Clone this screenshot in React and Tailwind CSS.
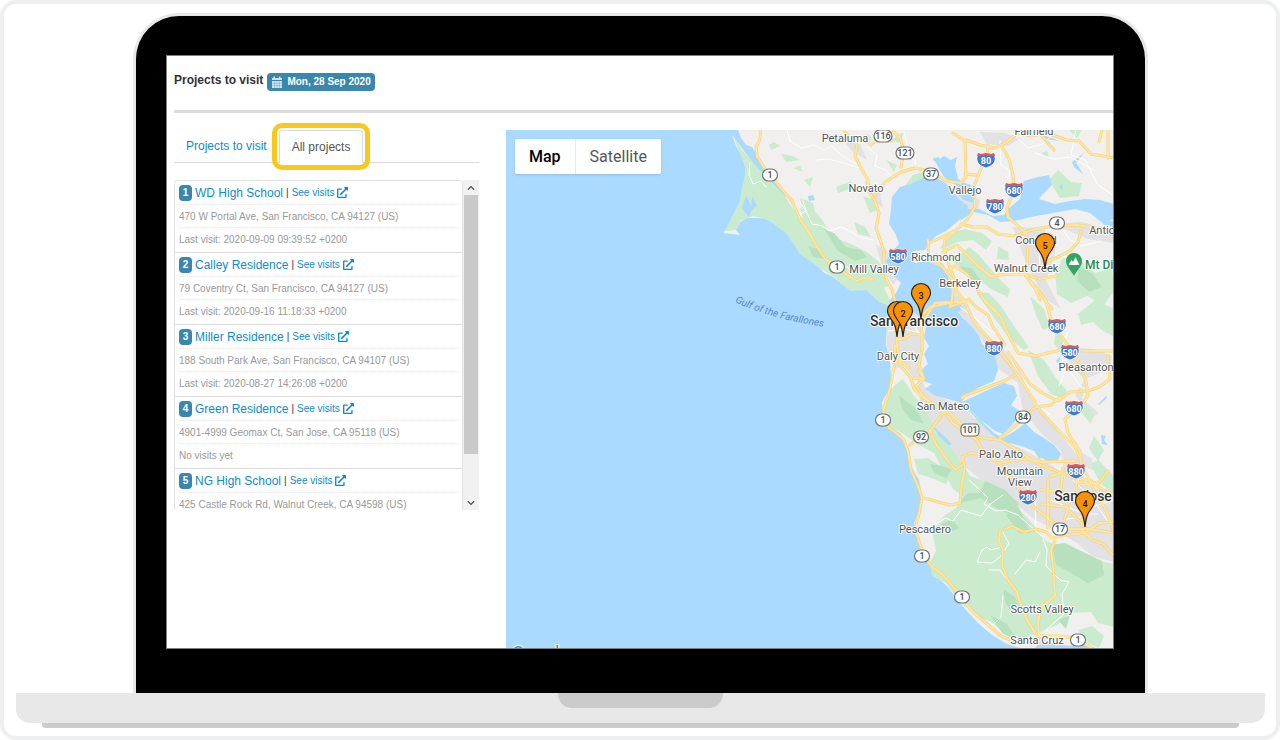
import { useState } from "react";
import { FaExternalLinkAlt, FaChevronUp, FaChevronDown } from "react-icons/fa";

const projects = [
  { id: 1, name: "WD High School", address: "470 W Portal Ave, San Francisco, CA 94127 (US)", visit: "Last visit: 2020-09-09 09:39:52 +0200" },
  { id: 2, name: "Calley Residence", address: "79 Coventry Ct, San Francisco, CA 94127 (US)", visit: "Last visit: 2020-09-16 11:18:33 +0200" },
  { id: 3, name: "Miller Residence", address: "188 South Park Ave, San Francisco, CA 94107 (US)", visit: "Last visit: 2020-08-27 14:26:08 +0200" },
  { id: 4, name: "Green Residence", address: "4901-4999 Geomax Ct, San Jose, CA 95118 (US)", visit: "No visits yet" },
  { id: 5, name: "NG High School", address: "425 Castle Rock Rd, Walnut Creek, CA 94598 (US)", visit: "" },
];

// Map artwork, all in the same coordinate space as the viewBox of <BayAreaMap />
const land =
  "M738 130 L741 138 746 145 752 147 758 156 766 170 774 180 782 190 786 198 778 194 768 183 758 171 750 159 742 148 732 135 736 146 742 156 746 166 745 178 743 190 739 203 734 216 729 226 723 233 740 235 736 230 740 222 747 218 757 218 766 219 776 224 788 234 795 243 799 252 808 258 818 265 823 272 833 277 843 285 855 289 864 287 868 291 876 299 885 304 891 306 887 320 886 345 890 360 891 378 889 390 882 402 883 418 890 427 901 434 905 446 910 460 913 470 919 480 922 497 919 510 914 524 918 542 923 556 929 565 937 577 947 586 956 598 966 610 978 623 992 635 1007 644 1020 648 L1114 648 L1114 130Z";

const water = [
  // san pablo bay and central bay
  "M892 197 L900 187 911 184 923 178 937 178 947 184 952 191 960 200 968 206 966 213 957 222 946 231 936 236 929 243 925 250 913 251 910 256 915 263 926 261 936 265 944 269 948 277 951 290 955 302 963 307 958 312 964 319 972 327 979 336 982 344 993 350 996 360 998 370 994 381 980 387 967 394 962 402 971 411 983 423 994 433 1003 438 1015 431 1025 423 1034 432 1044 438 1054 445 1061 454 1057 462 1046 461 1034 451 1021 446 1009 443 998 440 987 430 974 416 961 403 948 399 936 396 925 389 932 384 920 380 919 372 928 364 924 354 929 346 924 338 926 327 921 318 909 309 896 305 889 301 896 293 901 283 891 273 886 261 892 252 899 244 896 235 889 224 891 210Z",
  "M962 402 L975 396 990 389 1004 383 1014 386 1017 396 1011 405 1021 412 1013 424 1003 434 995 431 981 420Z",
  // carquinez strait and suisun bay
  "M963 209 L979 209 993 216 1004 215 1008 209 1020 199 1024 181 1038 177 1049 175 1052 185 1043 194 1039 199 1055 204 1070 201 1085 199 1100 200 1114 204 1114 219 1101 222 1090 213 1075 209 1053 213 1036 216 1014 221 1000 222 988 215 973 212 960 221Z",
  // lakes, creeks and salt ponds
  "M932 159 L938 160 944 156 951 160 957 157 955 166 958 178 951 176 945 172 940 166Z M933 158 L939 157 943 169 957 180 953 184 944 177Z M952 174 L962 182 971 185 977 193 972 203 962 199 956 190Z",
  "M1040 134 L1060 141 1045 139Z M1072 162 L1084 153 1076 163 1084 175 1074 167Z M1059 187 L1063 183 1062 190Z",
  "M1083 208 L1094 211 1104 225 1114 227 1114 222 1099 216Z",
  "M932 425 L944 436 952 444 948 445 938 435Z",
  "M1098 404 L1107 395 1106 399 1099 405Z M1101 435 L1106 436 1104 440 1108 445 1102 444Z",
  "M746 195 L752 208 749 217 742 208Z M752 196 L757 205 751 211Z",
  "M808 196 L813 195 815 200 809 201Z M1056 361 L1061 355 1059 364Z",
  "M1037 645 L1052 643 1069 646 1080 642 1094 648 1035 649Z",
];

const parks = [
  "M733 135 L742 150 760 170 783 194 792 207 803 219 813 232 824 246 835 262 851 270 866 267 872 278 882 284 887 294 892 305 880 303 866 290 850 291 834 277 818 267 800 254 787 234 768 220 753 216 740 221 736 230 725 231 739 203 746 170Z",
  "M800 208 L817 213 823 221 831 236 851 244 868 253 878 261 885 271 888 286 880 289 866 275 846 266 825 261 808 237Z",
  "M800 198 L813 203 817 219 803 213Z",
  "M891 140 L904 132 899 143Z M836 187 L851 181 850 189 838 193Z M886 160 L897 165 894 172Z",
  "M904 187 L913 175 926 171 934 177 913 184 897 196Z",
  "M939 249 L952 233 964 229 982 233 992 241 986 250 973 240 957 242 948 247Z",
  "M953 262 L969 247 979 255 989 267 999 279 1010 289 1008 297 991 289 977 278Z",
  "M976 292 L989 293 1001 306 1012 323 1021 336 1029 347 1024 350 1009 338 994 318Z",
  "M998 246 L1008 252 1009 260 997 259Z",
  "M1055 273 L1063 258 1082 262 1095 273 1112 268 1114 291 1104 305 1087 296 1071 303 1057 294Z",
  "M1078 314 L1095 300 1114 309 1114 337 1102 330 1093 322 1081 325Z",
  "M1030 296 L1044 309 1050 327 1043 330 1036 315Z M1056 330 L1062 340 1071 356 1064 358 1054 343Z",
  "M1028 350 L1044 360 1056 378 1067 391 1063 399 1051 394 1038 376Z",
  "M1049 180 L1058 170 1071 182 1082 183 1079 196 1060 198Z",
  "M1069 130 L1082 130 1077 138Z M1041 154 L1047 150 1049 158Z",
  "M863 196 L872 199 878 210 870 213Z M854 222 L865 227 871 237 858 234Z M866 133 L872 138 868 146Z",
  "M891 388 L903 379 914 396 923 406 931 421 936 433 949 444 961 462 970 476 982 480 992 491 1003 498 1017 507 1033 524 1046 541 1060 546 1075 552 1094 558 1103 566 1108 588 1114 603 1114 627 1098 623 1091 612 1070 613 1057 625 1045 630 1026 638 1014 639 1002 631 991 622 978 616 961 603 946 583 932 576 930 562 936 551 932 530 945 515 956 508 963 497 953 489 944 472 934 453 917 444 902 433 889 427 884 409Z",
  "M914 459 L928 458 940 466 951 474 946 484 929 477 918 474Z",
  "M1051 545 L1064 543 1081 553 1100 561 1114 564 1114 600 1091 590 1071 577 1055 568Z",
  "M1090 464 L1099 460 1113 476 1114 494 1101 484Z",
  "M1078 630 L1092 626 1104 636 1099 648 1087 643Z",
  "M1085 405 L1094 413 1091 424 1080 411Z M1094 436 L1104 450 1098 461 1089 448Z",
  "M900 280 L908 277 913 285 904 289Z",
  "M975 419 L983 416 984 424 977 425Z",
  "M769 145 L774 142 780 146 771 150Z M781 154 L793 156 800 160 786 162Z M793 168 L800 166 803 172Z M804 180 L813 177 810 187Z",
];

const darkParks = [
  "M824 229 L834 233 846 247 861 250 867 257 855 261 838 251Z",
  "M808 246 L820 250 824 259 813 257Z",
  "M899 395 L907 402 916 409 924 424 911 420 902 408Z",
  "M985 481 L1005 490 1019 504 1012 516 996 508 981 498 956 504 968 493 980 493Z",
  "M930 464 L943 466 952 470 946 478 934 473Z",
  "M1006 515 L1018 506 1025 520 1031 533 1019 533Z",
  "M1052 545 L1065 543 1081 551 1102 561 1104 575 1088 583 1071 573 1056 565Z",
  "M1003 589 L1015 597 1023 612 1013 614 1005 602Z",
  "M1079 266 L1093 274 1102 287 1089 292 1077 281Z",
  "M959 266 L971 268 981 280 973 280Z",
  "M990 615 L1006 623 1018 640 1003 634Z",
  "M941 524 L952 519 959 528 949 533Z",
  "M1058 620 L1070 615 1066 629Z",
  "M1035 452 L1041 448 1046 457 1039 459Z",
];

const urban = [
  "M887 315 L899 307 912 311 922 322 924 346 920 372 914 378 904 366 892 370 887 347Z",
  "M915 366 L926 389 947 400 963 407 983 426 1003 441 1022 449 1053 466 1066 480 1114 493 1114 562 1092 556 1077 543 1058 532 1034 519 1009 498 984 482 962 464 946 447 935 428 921 408Z",
  "M925 260 L943 263 954 290 966 306 984 334 1005 350 1020 372 1033 403 1056 429 1080 459 1087 491 1065 480 1061 451 1040 432 1023 411 1018 383 998 368 983 341 958 311 948 281Z",
  "M949 190 L964 191 980 200 978 212 964 208Z",
  "M980 132 L1004 133 1021 138 1008 146 987 144Z",
  "M1013 227 L1041 228 1056 236 1055 253 1046 281 1061 309 1044 298 1033 277 1023 255Z",
  "M1052 224 L1082 222 1114 231 1114 243 1088 239Z",
  "M1062 347 L1094 349 1112 356 1110 369 1085 379 1071 366Z",
  "M876 245 L886 249 891 262 899 276 893 285 881 263Z",
  "M864 181 L879 188 883 208 872 200Z M843 140 L860 144 867 160 854 153Z",
  "M1089 373 L1082 399 1099 413 1092 418 1075 395Z",
  "M1029 637 L1044 636 1057 643 1033 645Z",
  "M1078 450 L1092 459 1093 470 1082 466Z",
];

const minorRoads = [
  "M787 130 L790 141 802 148 814 145 824 150 832 146 840 154 852 162 862 165",
  "M868 147 L877 155 875 166 886 170 894 180 M816 160 L828 159 844 163 860 168",
  "M800 202 L807 213 812 224 823 226 829 231 841 227 852 232 859 237 873 240",
  "M750 163 L749 175 753 184 761 181 766 187 M797 216 L806 211 803 201",
  "M904 132 L908 147 916 155 915 165 M1000 141 L1001 165 1010 171 1007 181",
  "M1012 133 L1028 148 1043 144 1054 133 M1076 130 L1071 155 1085 160 1098 185 1114 196",
  "M1035 153 L1054 159 1070 157 1083 164 1095 171",
  "M1047 228 L1044 245 1056 256 1068 257 1080 250 M1028 238 L1038 246 1040 264 1035 273",
  "M1059 225 L1071 241 1082 246 1101 241",
  "M998 340 L1009 355 1020 377 1032 398 1050 415 M1068 332 L1060 352 1065 371 1059 386",
  "M960 307 L975 318 987 328 999 336 1007 346 M1071 373 L1082 388 1097 389",
  "M969 480 L979 489 988 498 984 504 996 511 1005 510 1018 515 1029 525 1044 538",
  "M924 536 L936 525 945 518 953 521 961 510 981 516 989 505 1003 495",
  "M999 548 L990 550 987 547 982 550 977 562 992 563 1000 557 1009 543 1003 533",
  "M989 570 L1000 570 1008 581 1016 592 1021 607 M1003 596 L1001 617 993 625 M1015 574 L1026 560 1035 562 1040 552",
  "M1043 539 L1047 550 1046 566 1060 580 1069 582 1062 594 1064 614 1046 630",
  "M1023 481 L1035 500 1036 529 M1073 480 L1090 496 1103 514 1110 525 M1051 500 L1084 514 1098 514",
  "M1056 542 L1053 529 1065 519 1079 518 1095 506 1114 500",
  "M890 358 L895 379 892 388 M912 309 L912 323 920 335 M888 331 L904 329 921 333",
];

const highways = [
  // west side, us 101 through the peninsula
  "M844 130 L850 138 857 145 855 156 861 168 868 180 868 191 874 199 879 213 876 228 881 242 884 252 884 265 886 278 892 290 896 305 896 322 897 345 900 365 911 378 914 389 922 397 934 405 944 412 952 422 965 433 977 440 984 454 999 463 1012 478 1022 494 1035 508 1053 522 1067 529 1088 529 1114 533",
  "M760 130 Q762 138 756 147 L757 156 765 169 776 182 785 193 792 201 800 219 808 231 816 245 825 259 835 265 848 276 857 281 864 278 873 279",
  "M895 345 L895 362 892 378 889 393 884 408 883 420 887 426 896 433 904 440 908 451 911 470 918 486 922 498 919 514 915 529 920 544 924 556 933 568 942 574 950 583 962 597 971 610 986 623 1001 636 1015 642",
  "M922 333 L922 350 919 365 924 379 916 386 924 397 938 408 951 414 963 426 970 434 982 438 1000 440 1019 451 1036 463 1054 470 1070 477 1091 481 1103 490 1114 494",
  "M896 340 L905 338 911 334 923 335 M923 322 L935 303 949 302",
  "M922 333 L920 318 930 307 949 303 964 301",
  "M875 195 L885 182 901 172 915 168 932 172 946 181 961 183 966 177 965 141 953 133",
  "M893 131 L900 138 904 151 901 167 M871 145 L881 136 892 141",
  "M966 140 L980 145 995 148 1005 143 1018 133 1031 136 1047 133 1067 140 1079 141 1091 154 1114 158",
  "M1108 130 L1108 158 M965 174 L976 175",
  "M988 146 L987 157 980 171 974 186 975 207 967 220 955 231 945 240 944 248 949 265 954 278 952 299",
  "M1001 145 L1009 159 1013 175 1014 190 1007 208 1008 217 1017 225 1026 233 1028 245 1027 262 1026 276 1035 286 1046 301 1051 320 1062 337 1070 348 1080 365 1086 382 1088 395 1082 405 1065 419 1068 433 1080 451 1082 474 1076 484 1078 505 1084 519",
  "M961 224 L973 227 987 227 998 234 1015 236 1035 229 1053 226 1078 225 1094 228 1114 230",
  "M929 243 L942 237 954 231 M928 240 L929 259 940 264 951 278 957 291 965 302 971 316 979 328 990 340 1001 353 1016 372 1028 391 1041 412 1058 430 1075 447 1085 471 1095 493 1106 510 1114 532",
  "M948 270 L955 266 967 274 974 284 985 301 1000 316 1010 338 1018 353 1035 356 1061 350 1092 351 1114 351",
  "M943 252 L957 245 970 258 978 266 990 276 1010 274 1025 274 1039 279 1057 276",
  "M962 398 L966 395 985 388 1004 381 1017 374 M1000 438 L1015 426 1026 414 1036 407 1051 405 1060 397",
  "M1008 352 L1021 371 1030 384 1044 394 1058 401 1070 392 1088 391 1099 387 1110 379 1108 356",
  "M1026 276 L1036 290 1040 300 M952 300 L950 307 963 302 969 299 976 307 988 315 993 327 1005 345",
  "M909 368 L900 360 894 355 M914 378 L923 379 919 370",
  "M984 455 L971 453 962 457 965 467 962 482 960 503 950 505 938 502 928 499 922 498",
  "M910 445 L920 437 929 433 935 424 943 413 943 405 966 404",
  "M930 430 L936 444 948 461 955 470 962 465",
  "M999 463 L1010 461 1027 459 1042 462 1075 461",
  "M1005 529 L1012 526 1024 532 1036 529 1046 532 1052 538 1066 535 1085 533 1099 523 1114 522",
  "M1000 531 L999 541 1003 550 1002 565 1008 580 1017 592 1020 603 1026 618 1035 633 1040 637",
  "M1055 541 L1051 550 1053 566 1054 580 1055 596 1042 606 1038 622 1039 636 1060 636 1077 639 1095 650",
  "M1080 528 L1092 540 1103 544 1114 556 M1063 468 L1061 488 1068 508 1064 521",
  "M1048 480 L1048 528 M1050 476 L1068 472 1082 485 1100 482 M1041 490 L1059 492 1080 504 1102 499 M1041 504 L1066 507 1084 526",
  "M1046 262 L1060 256 1071 250 1078 242 1081 231",
  "M1037 130 L1048 143 1054 150 M1046 302 L1052 309",
  "M1102 130 L1099 142 M1108 471 L1098 484",
];

const labels = [
  { text: "Petaluma", x: 845, y: 142 },
  { text: "Novato", x: 866, y: 192 },
  { text: "Vallejo", x: 965, y: 194 },
  { text: "Fairfield", x: 1034, y: 135 },
  { text: "Richmond", x: 936, y: 261 },
  { text: "Mill Valley", x: 874, y: 273 },
  { text: "Berkeley", x: 960, y: 287 },
  { text: "Concord", x: 1036, y: 244 },
  { text: "Walnut Creek", x: 1026, y: 272 },
  { text: "Antioch", x: 1108, y: 234 },
  { text: "Daly City", x: 898, y: 360 },
  { text: "San Mateo", x: 943, y: 410 },
  { text: "Pleasanton", x: 1086, y: 371 },
  { text: "Palo Alto", x: 1001, y: 458 },
  { text: "Mountain", x: 1020, y: 475 },
  { text: "View", x: 1020, y: 486 },
  { text: "Pescadero", x: 925, y: 533 },
  { text: "Scotts Valley", x: 1042, y: 613 },
  { text: "Santa Cruz", x: 1037, y: 644 },
];

const cities = [
  { text: "San Francisco", x: 914, y: 326 },
  { text: "San Jose", x: 1083, y: 501 },
];

const stateRoutes = [
  { no: "1", x: 770, y: 175 }, { no: "116", x: 883, y: 136 }, { no: "121", x: 905, y: 153 },
  { no: "37", x: 931, y: 174 }, { no: "1", x: 837, y: 267 }, { no: "4", x: 1057, y: 223 },
  { no: "1", x: 883, y: 420 }, { no: "92", x: 921, y: 437 }, { no: "84", x: 1023, y: 417 },
  { no: "101", x: 970, y: 430 }, { no: "17", x: 1060, y: 529 }, { no: "1", x: 922, y: 556 },
  { no: "1", x: 962, y: 597 }, { no: "1", x: 1078, y: 640 },
];

const interstates = [
  { no: "80", x: 986, y: 160 }, { no: "680", x: 1014, y: 190 }, { no: "780", x: 995, y: 206 },
  { no: "580", x: 898, y: 256 }, { no: "680", x: 1057, y: 326 }, { no: "880", x: 994, y: 348 },
  { no: "580", x: 1070, y: 352 }, { no: "680", x: 1074, y: 408 }, { no: "880", x: 1076, y: 471 },
  { no: "280", x: 1028, y: 497 },
];

// the first marker sits behind the second one, so it carries no number
const markers = [
  { no: "", x: 897, y: 337 },
  { no: "2", x: 903, y: 337 },
  { no: "3", x: 921, y: 319 },
  { no: "5", x: 1045, y: 269 },
  { no: "4", x: 1085, y: 527 },
];

const StateShield = ({ no, x, y }) => {
  const w = no.length > 2 ? 18 : 15;
  return (
    <g transform={`translate(${x} ${y})`}>
      <rect x={-w / 2} y="-6" width={w} height="12" rx={no === "101" ? 4 : 6} fill="#fff" stroke="#6f7478" strokeWidth="1.2" />
      <text y="3" textAnchor="middle" fontSize="9" fontWeight="500" fill="#4a4d50">{no}</text>
    </g>
  );
};

const InterstateShield = ({ no, x, y }) => (
  <g transform={`translate(${x} ${y})`}>
    <path d="M-8 -7 L-5 -6 0 -7 5 -6 8 -7 9 -3 C10 3 6 6 0 8 C-6 6 -10 3 -9 -3Z" fill="#3f78cf" stroke="#fff" strokeWidth="0.8" />
    <path d="M-8 -7 L-5 -6 0 -7 5 -6 8 -7 9 -4 L-9 -4Z" fill="#dd5a52" />
    <text y="4" textAnchor="middle" fontSize="9" fontWeight="700" fill="#fff">{no}</text>
  </g>
);

const Marker = ({ no, x, y }) => (
  <g transform={`translate(${x} ${y})`}>
    <path d="M0 0 C-1 -9 -2 -13 -6 -18 C-8 -21 -9.5 -23 -9.5 -26 A9.5 9.5 0 0 1 9.5 -26 C9.5 -23 8 -21 6 -18 C2 -13 1 -9 0 0Z" fill="#f7930b" stroke="#2b2110" strokeWidth="1.2" />
    {no && <text y="-20" textAnchor="middle" fontSize="9" fontWeight="500" fill="#221400">{no}</text>}
  </g>
);

const BayAreaMap = () => (
  <svg viewBox="506 130 607 518" preserveAspectRatio="xMinYMin slice" className="block w-full h-full font-['Roboto',sans-serif]" role="img" aria-label="Map of the Bay Area">
    <rect x="506" y="130" width="1600" height="900" fill="#aadaff" />
    <path d={land} fill="#f1f0ee" />
    <g fill="#e2e1e3">{urban.map((d, i) => <path key={i} d={d} />)}</g>
    <g fill="#cbebce">{parks.map((d, i) => <path key={i} d={d} />)}</g>
    <g fill="#b7e1be">{darkParks.map((d, i) => <path key={i} d={d} />)}</g>
    <g fill="#aadaff">{water.map((d, i) => <path key={i} d={d} />)}</g>
    <g fill="none" strokeLinejoin="round" strokeLinecap="round">
      <g stroke="#fff" strokeWidth="1">{minorRoads.map((d, i) => <path key={i} d={d} />)}</g>
      <g stroke="#f6d37a" strokeWidth="3">{highways.map((d, i) => <path key={i} d={d} />)}</g>
      <g stroke="#fee6a0" strokeWidth="1.8">{highways.map((d, i) => <path key={i} d={d} />)}</g>
    </g>

    {/* Shields */}
    {stateRoutes.map((s, i) => <StateShield key={i} {...s} />)}
    {interstates.map((s, i) => <InterstateShield key={i} {...s} />)}

    {/* Place names */}
    <g textAnchor="middle" stroke="#fff" strokeWidth="2" strokeLinejoin="round" paintOrder="stroke">
      <g fontSize="11" fill="#505356">
        {labels.map((l) => <text key={l.text} x={l.x} y={l.y}>{l.text}</text>)}
      </g>
      <g fontSize="14" fontWeight="500" fill="#2f3133">
        {cities.map((l) => <text key={l.text} x={l.x} y={l.y}>{l.text}</text>)}
      </g>
      <text x="1085" y="269" textAnchor="start" fontSize="12" fontWeight="500" fill="#1f8a4c">Mt Diablo</text>
    </g>
    <path id="gulf" d="M735 302 Q775 321 840 329" fill="none" />
    <text fontSize="10" fontStyle="italic" fill="#5a86cc"><textPath href="#gulf">Gulf of the Farallones</textPath></text>

    {/* Mt Diablo park pin */}
    <path d="M1074 276 C1072 271 1066 267 1066 261 A8 8 0 0 1 1082 261 C1082 267 1076 271 1074 276Z" fill="#34a462" />
    <path d="M1068.5 265 L1071.5 260 1073 262 1075.5 257 1079.5 265Z" fill="#fff" />

    {markers.map((m, i) => <Marker key={i} {...m} />)}

    <text x="512" y="659" fontSize="18" stroke="#fff" strokeWidth="2" paintOrder="stroke">
      <tspan fill="#4285f4">G</tspan><tspan fill="#ea4335">o</tspan><tspan fill="#fbbc05">o</tspan><tspan fill="#4285f4">g</tspan><tspan fill="#34a853">l</tspan><tspan fill="#ea4335">e</tspan>
    </text>
  </svg>
);

const CalendarIcon = () => (
  <svg viewBox="0 0 12 12" className="w-3 h-3" aria-hidden="true">
    <path d="M1 2 H2.5 V0.5 H4 V2 H8 V0.5 H9.5 V2 H11 V4 H1Z M1 5 H11 V12 H1Z" fill="#d3e5ee" />
    <path d="M1 7.3 H11 M1 9.6 H11 M3.5 5 V12 M6 5 V12 M8.5 5 V12" stroke="#3a87ad" strokeWidth="0.3" />
  </svg>
);

const ProjectItem = ({ project }) => (
  <li className="pl-1 pr-1">
    <div className="flex items-center h-6 border-b border-dotted border-gray-200 whitespace-nowrap">
      <span className="w-[13px] h-4 mr-[3px] rounded-sm bg-[#3a87ad] text-white text-[10px] leading-4 font-bold text-center">{project.id}</span>
      <a href="#project" className="text-xs text-[#0d8bd1]">{project.name}</a>
      <span className="mx-[3px] text-[10px] text-[#333]">|</span>
      <a href="#visits" className="flex items-center gap-[3px] text-[10px] text-[#0d8bd1]">
        See visits
        <FaExternalLinkAlt className="w-[11px] h-[11px]" />
      </a>
    </div>
    <p className="h-[23px] leading-[23px] text-[10px] text-[#999] border-b border-dotted border-gray-200 whitespace-nowrap">{project.address}</p>
    <p className="h-6 leading-6 text-[10px] text-[#999] whitespace-nowrap">{project.visit}</p>
  </li>
);

const App = () => {
  const [tab, setTab] = useState("all");
  const [mapType, setMapType] = useState("map");

  return (
    <div className="min-h-screen bg-white border-4 border-[#eeeff0] rounded-2xl pt-[9px] font-['Liberation_Sans',Arial,sans-serif]">
      {/* Laptop lid */}
      <div className="ml-[129px] mr-[128px] bg-black border-[3px] border-b-0 border-[#e8e8e8] rounded-t-[46px] pl-[30px] pr-[31px] pt-[39px] pb-11">
        <main className="bg-white border border-[#808080] pl-[7px] overflow-hidden">
          <header className="h-[54px] flex items-center gap-1 pb-[6px]">
            <h1 className="text-xs font-bold text-[#333]">Projects to visit</h1>
            <span className="flex items-center gap-1 h-[18px] px-1 mt-[3px] rounded-sm bg-[#3a87ad] text-white text-[10px] font-bold">
              <CalendarIcon />
              Mon, 28 Sep 2020
            </span>
          </header>
          <div className="h-[3px] bg-[#dcdcdc]" />

          <div className="flex gap-[27px] pt-[17px]">
            {/* Project list */}
            <section className="w-[305px] shrink-0">
              <div role="tablist" className="flex h-[33px] border-b border-[#ddd]">
                <button role="tab" aria-selected={tab === "visit"} onClick={() => setTab("visit")}
                  className="px-3 text-xs text-[#0d8bd1]">
                  Projects to visit
                </button>
                <div className="relative h-[33px]">
                  <button role="tab" aria-selected={tab === "all"} onClick={() => setTab("all")}
                    className="h-full px-3 text-xs text-[#555] bg-white border border-b-0 border-[#ddd] rounded-t-sm">
                    All projects
                  </button>
                  <div className="absolute -inset-x-[7px] -inset-y-[7px] border-[5px] border-[#f8c91c] rounded-[10px] pointer-events-none" />
                </div>
              </div>

              <div className="flex h-[330px] mt-[17px] overflow-hidden">
                <ul className="flex-1 min-w-0 border border-b-0 border-[#e3e3e3] divide-y divide-[#ddd] rounded-t-sm overflow-hidden">
                  {projects.map((p) => <ProjectItem key={p.id} project={p} />)}
                </ul>
                <div className="w-4 flex flex-col bg-[#f1f1f1] text-[#505050]">
                  <button aria-label="Scroll up" className="h-[15px] flex items-center justify-center"><FaChevronUp className="w-2 h-2" /></button>
                  <div className="flex-1 px-px">
                    <div className="h-[259px] bg-[#c9c9c9]" />
                  </div>
                  <button aria-label="Scroll down" className="h-[15px] flex items-center justify-center"><FaChevronDown className="w-2 h-2" /></button>
                </div>
              </div>
            </section>

            {/* Map */}
            <section className="relative flex-1 min-w-0 h-[518px] overflow-hidden">
              <BayAreaMap />
              <div className="absolute left-[9px] top-[9px] flex h-[35px] bg-white rounded-xs shadow font-['Roboto',sans-serif] text-base">
                <button onClick={() => setMapType("map")} aria-pressed={mapType === "map"}
                  className="px-[14px] font-medium text-black border-r border-[#e8e8e8]">
                  Map
                </button>
                <button onClick={() => setMapType("satellite")} aria-pressed={mapType === "satellite"}
                  className="px-[14px] text-[#565656]">
                  Satellite
                </button>
              </div>
            </section>
          </div>
        </main>
      </div>

      {/* Laptop base */}
      <div className="ml-3 mr-[11px] h-[30px] bg-[#e8e8e8] rounded-b-[14px]">
        <div className="mx-auto w-[165px] h-[15px] bg-[#cbcbcb] rounded-b-[14px]" />
      </div>
      <div className="ml-[38px] mr-[37px] h-[5px] bg-[#cbcbcb] rounded-b-sm" />
    </div>
  );
};

export default App;
